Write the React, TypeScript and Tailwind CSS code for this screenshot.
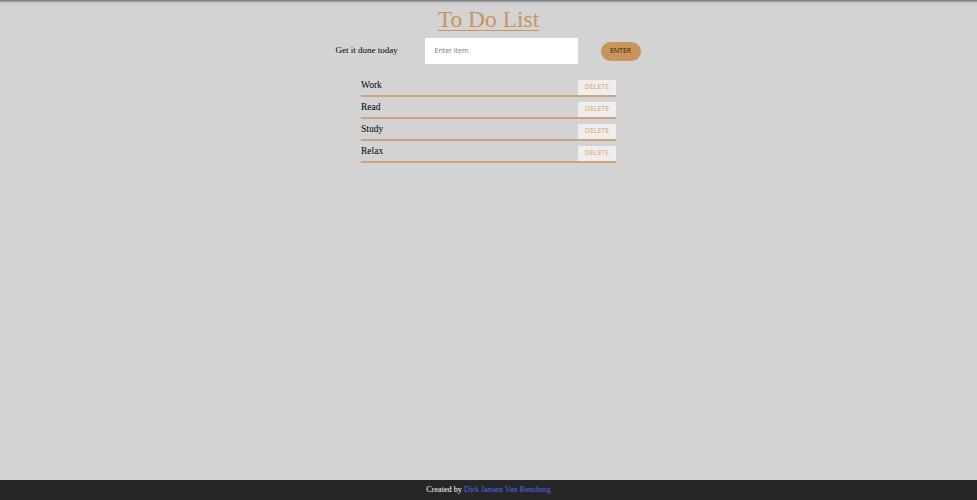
import React from 'react';

const items = ['Work', 'Read', 'Study', 'Relax'];

export default function App() {
  return (
    <div className="flex flex-col h-[500px] bg-[#d3d3d3] shadow-[inset_0_4px_3px_-3px_rgba(0,0,0,0.6)] font-['Liberation_Serif',serif]">
      <main className="flex-1 flex flex-col items-center">
        <h1 className="mt-[5px] text-[23.5px] leading-[28px] text-[#c9955d] underline underline-offset-[3px] decoration-1">
          To Do List
        </h1>
        <div className="mt-[5px] flex items-center w-[306px]">
          <span className="text-[9px] text-black w-[89px]">Get it done today</span>
          <div className="w-[153px] h-[26px] bg-white flex items-center pl-[10px]">
            <input
              placeholder="Enter item"
              className="w-full bg-transparent outline-none text-[7px] font-['Open_Sans',sans-serif] placeholder:text-[#777] text-[#333]"
            />
          </div>
          <button className="ml-[23px] w-[40px] h-[19px] rounded-full bg-[#c9955d] text-[7px] font-['Open_Sans',sans-serif] text-[#2a1a0a]">
            ENTER
          </button>
        </div>
        <ul className="mt-[11px] w-[255px] flex flex-col">
          {items.map(item => (
            <li key={item} className="h-[22px] flex items-end justify-between border-b-2 border-[#cfa478]">
              <span className="text-[9.5px] text-black pb-[3px]">{item}</span>
              <button className="w-[38px] h-[15px] bg-[#eeeeee] text-[7px] font-['Open_Sans',sans-serif] text-[#d99f66]">
                DELETE
              </button>
            </li>
          ))}
        </ul>
      </main>
      <footer className="h-[20px] bg-[#262626] flex items-center justify-center text-[8.2px] text-white">
        Created by&nbsp;<a className="text-[#4a6cf0]">Dirk Jansen Van Rensburg</a>
      </footer>
    </div>
  );
}
